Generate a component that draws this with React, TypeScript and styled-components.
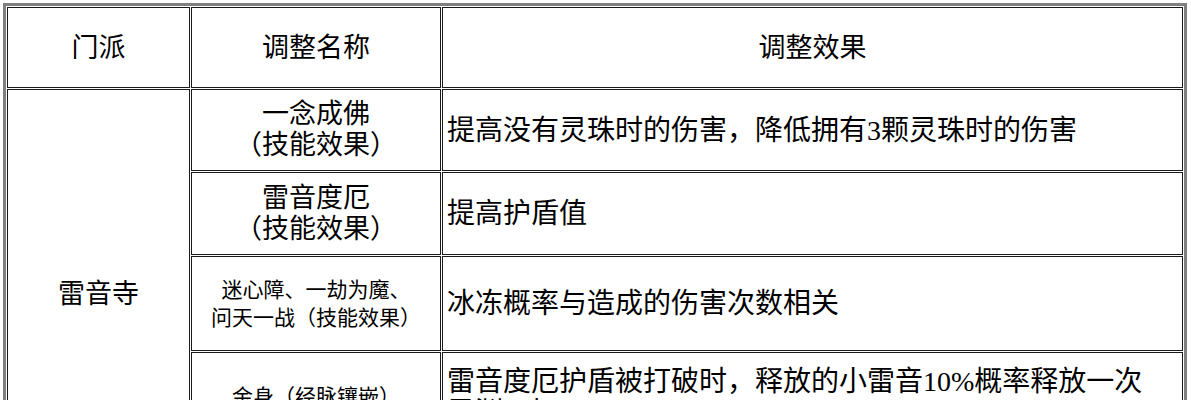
import styled, { createGlobalStyle } from "styled-components";

const GlobalStyle = createGlobalStyle`
  body {
    margin: 0;
    background: #ffffff;
  }
`;

interface Row {
  name: string[];
  small?: boolean;
  effect: string[];
  h: number;
}

const rows: Row[] = [
  { name: ["一念成佛", "（技能效果）"], effect: ["提高没有灵珠时的伤害，降低拥有3颗灵珠时的伤害"], h: 82 },
  { name: ["雷音度厄", "（技能效果）"], effect: ["提高护盾值"], h: 83 },
  { name: ["迷心障、一劫为魔、", "问天一战（技能效果）"], small: true, effect: ["冰冻概率与造成的伤害次数相关"], h: 95 },
  {
    name: ["金身（经脉镶嵌）"],
    small: true,
    effect: ["雷音度厄护盾被打破时，释放的小雷音10%概率释放一次", "灵渊天坛"],
    h: 90,
  },
  { name: ["金刚护体"], small: true, effect: ["提高护盾值"], h: 56 },
];

const App = () => {
  return (
    <>
      <GlobalStyle />
      <Table>
        <colgroup>
          <col style={{ width: 183 }} />
          <col style={{ width: 250 }} />
          <col style={{ width: 741 }} />
        </colgroup>
        <tbody>
          <TableRow $h={81}>
            <HeadCell>门派</HeadCell>
            <HeadCell>调整名称</HeadCell>
            <HeadCell>调整效果</HeadCell>
          </TableRow>
          {rows.map((r, i) => (
            <TableRow key={i} $h={r.h}>
              {i === 0 && <SectCell rowSpan={rows.length}>雷音寺</SectCell>}
              <NameCell $small={r.small}>
                {r.name.map((l, j) => (
                  <Line key={j}>{l}</Line>
                ))}
              </NameCell>
              <EffectCell>
                {r.effect.map((l, j) => (
                  <Line key={j}>{l}</Line>
                ))}
              </EffectCell>
            </TableRow>
          ))}
        </tbody>
      </Table>
    </>
  );
};

export default App;

const Table = styled.table`
  margin: 3px;
  width: 1184px;
  table-layout: fixed;
  border: 3px solid #808080;
  border-collapse: separate;
  border-spacing: 1px;
  font-family: "Liberation Serif", "Noto Sans CJK SC", serif;
  color: #000;
`;

const TableRow = styled.tr<{ $h: number }>`
  height: ${(p) => p.$h}px;
`;

const Cell = styled.td`
  border: 1px solid #1a1a1a;
  padding: 0 4px;
  vertical-align: middle;
`;

const HeadCell = styled(Cell)`
  text-align: center;
  font-size: 27px;
  line-height: 32px;
`;

const SectCell = styled(Cell)`
  text-align: center;
  font-size: 27px;
  line-height: 32px;
`;

const NameCell = styled(Cell)<{ $small?: boolean }>`
  text-align: center;
  font-size: ${(p) => (p.$small ? "21px" : "27px")};
  line-height: ${(p) => (p.$small ? "28px" : "31px")};
`;

const EffectCell = styled(Cell)`
  text-align: left;
  font-size: 28px;
  line-height: 31px;
`;

const Line = styled.div`
  white-space: nowrap;
`;
